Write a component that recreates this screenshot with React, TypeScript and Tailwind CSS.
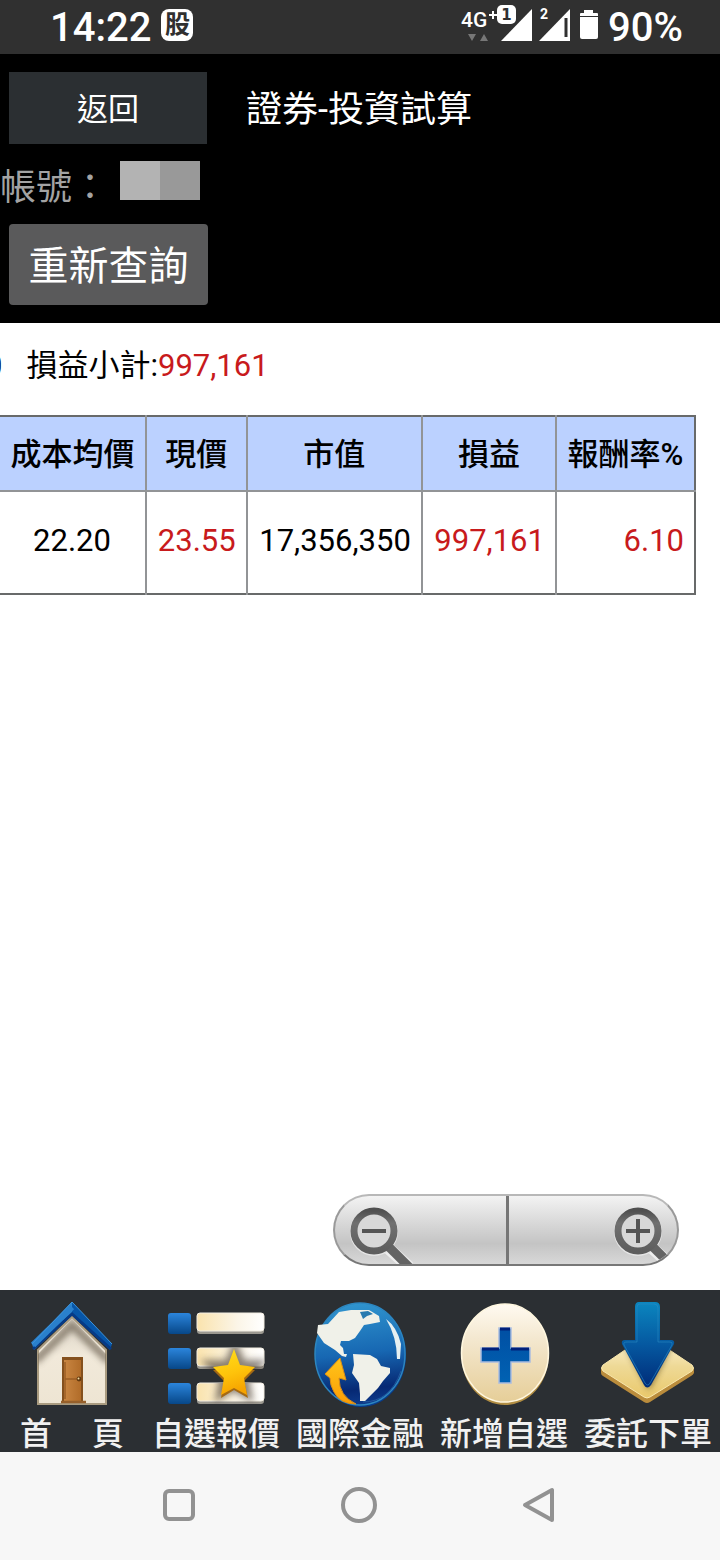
import type { ReactNode } from "react";

function StatusBar() {
  return (
    <header className="flex h-[54px] items-center justify-between bg-[#303030] pl-[50px] pr-[37px] text-white">
      <div className="flex items-center gap-[10px]">
        <span className="pt-0.5 text-[40px] leading-[52px] font-medium">14:22</span>
        <span className="mb-1 flex size-8 items-center justify-center rounded-lg bg-white text-[25px] leading-8 font-bold text-[#303030]">
          股
        </span>
      </div>
      <div className="flex items-center">
        <svg width="140" height="54" viewBox="0 0 140 54" aria-hidden="true">
          <text x="0" y="27" fontSize="21" fontWeight="500" fill="#fff">4G</text>
          <path d="M28 15h8M32 11v8" stroke="#fff" strokeWidth="2" />
          <path d="M7 34h8l-4 7z M19 41h8l-4-7z" fill="#777" />
          <path d="M71 9v32H40z" fill="#fff" />
          <rect x="36" y="5" width="19" height="19" rx="5" fill="#fff" />
          <text x="45.5" y="20" fontSize="15" fontWeight="700" textAnchor="middle" fill="#303030" fontFamily="DejaVu Sans">1</text>
          <text x="79" y="19" fontSize="14" fontWeight="700" fill="#fff">2</text>
          <path d="M109 9v32H78z" fill="#fff" />
          <path d="M105 18v19" stroke="#303030" strokeWidth="3" />
          <path d="M123 10h9v3h4q1 0 1 1v2h-18v-2q0-1 1-1h3z" fill="#fff" />
          <path d="M119 17h18v20q0 2-2 2h-14q-2 0-2-2z" fill="#fff" />
        </svg>
        <span className="ml-[7px] pt-0.5 text-[40px] leading-[52px] font-medium">90%</span>
      </div>
    </header>
  );
}

function AccountHeader() {
  return (
    <section className="bg-black px-[9px] pt-[18px] pb-[18px]">
      <div className="flex items-center gap-[39px]">
        <button className="h-[72px] w-[198px] bg-[#2b2f32] pt-1 text-[31px] text-white">返回</button>
        <h1 className="pt-1 text-[36px] leading-[68px] text-white">證券-投資試算</h1>
      </div>
      <div className="-ml-[9px] flex h-20 items-center gap-3">
        <span className="pt-2 text-[36px] leading-[72px] text-[#a3a3a3]">帳號：</span>
        <span className="mb-2 flex h-[39px] w-20">
          <span className="flex-1 bg-[#b3b3b3]" />
          <span className="flex-1 bg-[#999999]" />
        </span>
      </div>
      <button className="h-[81px] w-[199px] rounded-[4px] bg-[#5a5a5b] pt-1 text-[40px] text-white">重新查詢</button>
    </section>
  );
}

const columns = [
  { title: "成本均價", value: "22.20", col: "w-[21%]", cell: "pr-[34px]" },
  { title: "現價", value: "23.55", col: "w-[14.5%]", cell: "pr-[10px] text-[#c81a1c]" },
  { title: "市值", value: "17,356,350", col: "w-[25.2%]", cell: "pr-[10px]" },
  { title: "損益", value: "997,161", col: "w-[19.3%]", cell: "pr-[10px] text-[#c81a1c]" },
  { title: "報酬率%", value: "6.10", col: "w-[20%]", cell: "pr-[10px] text-[#c81a1c]" },
];

function Holdings() {
  return (
    <div className="overflow-hidden pr-6">
      <p className="-ml-[15px] flex h-[92px] items-center gap-6 pb-1.5 text-[31px] text-black">
        <span>0</span>
        <span>
          損益小計:<span className="text-[#c81a1c]">997,161</span>
        </span>
      </p>
      <table className="w-full table-fixed border-collapse border-y-2 border-r-2 border-[#686a6a] text-black">
        <colgroup>
          {columns.map((c) => (
            <col key={c.title} className={c.col} />
          ))}
        </colgroup>
        <thead>
          <tr className="h-[75px] bg-[#bbd1ff]">
            {columns.map((c) => (
              <th key={c.title} className="border-r-2 border-b-2 border-[#929496] p-0 pt-1 text-[31px] font-medium whitespace-nowrap last:border-r-[#686a6a]">
                {c.title}
              </th>
            ))}
          </tr>
        </thead>
        <tbody>
          <tr className="h-[103px]">
            {columns.map((c) => (
              <td key={c.title} className={"border-r-2 border-[#929496] pb-0.5 text-right text-[31px] last:border-r-[#686a6a] " + c.cell}>
                {c.value}
              </td>
            ))}
          </tr>
        </tbody>
      </table>
    </div>
  );
}

function Lens({ plus }: { plus?: boolean }) {
  return (
    <svg width="64" height="58" viewBox="0 0 64 58" aria-hidden="true">
      <defs>
        <linearGradient id={plus ? "ringIn" : "ringOut"} x1="0" y1="0" x2="0" y2="1">
          <stop offset="0" stopColor="#505050" />
          <stop offset="0.3" stopColor="#707070" />
          <stop offset="1" stopColor="#5e5e5e" />
        </linearGradient>
      </defs>
      <path d="M38 41l22 20" stroke="#eee" strokeWidth="12" />
      <circle cx="25" cy="26" r="20" fill="none" stroke="#e4e4e4" strokeWidth="8" />
      <path d="M38 39l22 22" stroke="#646464" strokeWidth="9" />
      <circle cx="25" cy="25" r="20" fill="#d8d8d8" stroke={plus ? "url(#ringIn)" : "url(#ringOut)"} strokeWidth="7" />
      <path d={plus ? "M13 25h24M25 13v24" : "M13 25h24"} stroke="#555" strokeWidth="4" />
    </svg>
  );
}

function ZoomControls() {
  return (
    <div className="mr-[41px] mb-6 grid h-[72px] w-[346px] grid-cols-2 self-end overflow-hidden rounded-full border-2 border-t-[#b8b8b8] border-r-[#999] border-b-[#777] border-l-[#999] bg-linear-to-b from-[#f3f3f3] via-[#c4c4c4] via-70% to-[#d8d8d8]">
      <button aria-label="縮小" className="flex items-end pl-[14px]">
        <Lens />
      </button>
      <button aria-label="放大" className="flex items-end justify-end border-l-3 border-[#767676]">
        <Lens plus />
      </button>
    </div>
  );
}

function HouseIcon() {
  return (
    <svg width="100" height="110" viewBox="1 0 100 110" aria-hidden="true">
      <defs>
        <linearGradient id="wall" x1="0" y1="0" x2="0" y2="1">
          <stop offset="0" stopColor="#d9d2c5" />
          <stop offset="0.45" stopColor="#f1e9da" />
          <stop offset="1" stopColor="#eee5d3" />
        </linearGradient>
        <linearGradient id="roofLeft" x1="0" y1="0" x2="0" y2="1">
          <stop offset="0" stopColor="#2b87cf" />
          <stop offset="1" stopColor="#2279cb" />
        </linearGradient>
        <linearGradient id="door" x1="0" y1="0" x2="1" y2="0">
          <stop offset="0" stopColor="#c98642" />
          <stop offset="1" stopColor="#b16c29" />
        </linearGradient>
        <filter id="eave" x="-20%" y="-20%" width="140%" height="140%">
          <feGaussianBlur stdDeviation="3" />
        </filter>
        <clipPath id="wallShape">
          <path d="M17 54L51 19l34 35v50H17z" />
        </clipPath>
      </defs>
      <path d="M17 50L51 17l34 33v54H17z" fill="url(#wall)" stroke="#a99b80" strokeWidth="2" />
      <path d="M14 61L51 25l37 36" fill="none" stroke="#6f6554" strokeWidth="8" opacity="0.75" filter="url(#eave)" clipPath="url(#wallShape)" />
      <path d="M51 2L11 44l2 6L51 15z" fill="url(#roofLeft)" />
      <path d="M51 2l40 42-2 6L51 15z" fill="#0756a8" />
      <path d="M12 49L51 14l39 35" fill="none" stroke="#063a86" strokeWidth="3" />
      <path d="M12 45L51 7" fill="none" stroke="#2a80cc" strokeWidth="6" />
      <path d="M11 44L51 2l40 42" fill="none" stroke="#3c93dc" strokeWidth="1" />
      <rect x="41" y="57" width="21" height="45" fill="#84501d" />
      <rect x="43" y="60" width="17" height="41" fill="url(#door)" />
      <path d="M44 79h15M44 62v37" stroke="#9a5d24" strokeWidth="1.5" />
      <path d="M40 102h25" stroke="#96602b" strokeWidth="2.5" />
      <circle cx="58" cy="79" r="2.4" fill="#62390f" />
      <circle cx="57.5" cy="78.5" r="1" fill="#f3dba0" />
    </svg>
  );
}

function WatchlistIcon() {
  return (
    <svg width="100" height="110" viewBox="0 0 100 110" aria-hidden="true">
      <defs>
        <linearGradient id="blueTile" x1="0" y1="0" x2="0" y2="1">
          <stop offset="0" stopColor="#2b85dc" />
          <stop offset="1" stopColor="#074788" />
        </linearGradient>
        <linearGradient id="creamBar" x1="0" y1="0" x2="1" y2="0">
          <stop offset="0" stopColor="#fae3ad" />
          <stop offset="0.6" stopColor="#fbf5e7" />
          <stop offset="1" stopColor="#fff" />
        </linearGradient>
        <linearGradient id="gold" x1="0" y1="0" x2="0.3" y2="1">
          <stop offset="0" stopColor="#ffe01c" />
          <stop offset="0.6" stopColor="#fec30b" />
          <stop offset="1" stopColor="#f6a400" />
        </linearGradient>
        <filter id="starShade" x="-40%" y="-40%" width="180%" height="180%">
          <feGaussianBlur stdDeviation="3.5" />
        </filter>
        <clipPath id="bars">
          <path d="M31 13h67v22H31z M31 48h67v22H31z M31 83h67v22H31z" />
        </clipPath>
      </defs>
      {[13, 48, 83].map((y) => (
        <g key={y}>
          <rect x="2" y={y} width="23" height="21" rx="3" fill="url(#blueTile)" />
          <rect x="31" y={y} width="67" height="21" rx="3" fill="#9b9890" />
          <rect x="31" y={y} width="67" height="18" rx="3" fill="url(#creamBar)" stroke="#f3eee3" strokeWidth="1" />
        </g>
      ))}
      <path d="M69 48l7 16h16L79 77l3 18-14-8-14 8 3-18-13-13h18z" fill="#40362a" stroke="#40362a" strokeWidth="8" opacity="0.6" filter="url(#starShade)" clipPath="url(#bars)" />
      <path d="M68 53l7 15 14 2-11 11 4 17-14-8-13 8 3-17-11-11 15-2z" fill="#a66a12" />
      <path d="M68 49l6 16 15 2-11 11 3 17-13-7-13 7 3-17-11-11 15-2z" fill="url(#gold)" />
    </svg>
  );
}

function GlobeIcon() {
  return (
    <svg width="100" height="110" viewBox="0 -1 100 110" aria-hidden="true">
      <defs>
        <linearGradient id="ocean" x1="0.4" y1="0" x2="0.5" y2="1">
          <stop offset="0" stopColor="#3095cf" />
          <stop offset="0.5" stopColor="#1767b2" />
          <stop offset="0.85" stopColor="#062974" />
          <stop offset="1" stopColor="#0e3b8b" />
        </linearGradient>
        <linearGradient id="arrowGold" x1="0" y1="0" x2="0" y2="1">
          <stop offset="0" stopColor="#ffc51b" />
          <stop offset="1" stopColor="#fb9d04" />
        </linearGradient>
      </defs>
      <ellipse cx="51" cy="54" rx="45" ry="52" fill="#073c8d" />
      <ellipse cx="50" cy="53" rx="45" ry="51" fill="url(#ocean)" stroke="#2d86bf" strokeWidth="1.5" />
      <path d="M18 23l11-12 12-2 18 0 10 6 1 6-10 2-6 1-4 6-5 7-6 3-8 0-1 4 3 3 1 6 3 0-1 3-4-1-7-6-11-7-7-10 1-8z" fill="#f0f1e9" />
      <path d="M50 11l8-1 5 3-6 2-4 3z" fill="#287bb0" />
      <path d="M76 18q11 8 15 25l-1 15h-3q0-22-11-40z" fill="#e7f0f1" />
      <path d="M43 53l17 1 7 4 4 7 9 2 0 5-7 8-5 7-13 13-5 0 0-7-1-11-7-10 2-8z" fill="#f0f1e9" />
      <path d="M30 57l6 22-7-2q0 18 17 26-16 0-22-12-4-7-4-14l-5-4z" fill="url(#arrowGold)" stroke="#d88d19" strokeWidth="1" />
      <path d="M91 70q-11 31-38 31" fill="none" stroke="#2762a5" strokeWidth="1" opacity="0.8" />
    </svg>
  );
}

function AddIcon() {
  return (
    <svg width="100" height="110" viewBox="0 0 100 110" aria-hidden="true">
      <defs>
        <linearGradient id="coin" x1="0" y1="0" x2="0" y2="1">
          <stop offset="0" stopColor="#fffaf1" />
          <stop offset="0.35" stopColor="#f4e8d0" />
          <stop offset="1" stopColor="#e6ce98" />
        </linearGradient>
        <linearGradient id="plusFill" x1="0" y1="0" x2="0" y2="1">
          <stop offset="0" stopColor="#004fa3" />
          <stop offset="1" stopColor="#0162b3" />
        </linearGradient>
      </defs>
      <ellipse cx="51" cy="56" rx="43.5" ry="49" fill="#b18d43" />
      <ellipse cx="51" cy="53" rx="43.5" ry="49" fill="url(#coin)" stroke="#fff7df" strokeWidth="1.5" />
      <path d="M45 28h12v20h19v14H57v21H45V62H27V48h18z" fill="url(#plusFill)" stroke="#a9bce0" strokeWidth="1.5" />
      <path d="M46 29h10M28 49h17M57 49h18" stroke="#00207a" strokeWidth="3" />
    </svg>
  );
}

function OrderIcon() {
  return (
    <svg width="100" height="110" viewBox="1 1 100 110" aria-hidden="true">
      <defs>
        <linearGradient id="plate" x1="0" y1="0" x2="0" y2="1">
          <stop offset="0" stopColor="#fff7dd" />
          <stop offset="0.5" stopColor="#eed996" />
          <stop offset="1" stopColor="#eac96b" />
        </linearGradient>
        <linearGradient id="arrowBlue" x1="0" y1="0" x2="0" y2="1">
          <stop offset="0" stopColor="#0b86bf" />
          <stop offset="0.5" stopColor="#0558a0" />
          <stop offset="1" stopColor="#002b78" />
        </linearGradient>
        <filter id="plateShade" x="-20%" y="-20%" width="140%" height="140%">
          <feGaussianBlur stdDeviation="3" />
        </filter>
        <clipPath id="plateShape">
          <path d="M4 66L50 36l47 30v4L50 101 4 70z" />
        </clipPath>
      </defs>
      <path d="M4 69L50 39l47 30v5q-1 2-3 3L53 103q-3 2-6 0L6 77q-2-1-2-3z" fill="#ba8c3c" />
      <path d="M6 66L50 36l45 30q3 3 0 6L53 98q-3 2-6 0L6 72q-3-3 0-6z" fill="url(#plate)" stroke="#f9e8ae" strokeWidth="1" />
      <path d="M26 42h51L52 91z" fill="#4b3b15" opacity="0.7" filter="url(#plateShade)" clipPath="url(#plateShape)" />
      <path d="M42 3h16q5 0 5 5v33h11q4 0 3 4L54 86q-4 5-7 0L25 45q-1-4 3-4h10V8q0-5 4-5z" fill="url(#arrowBlue)" />
      <path d="M40 8q0-3 3-3h14q4 0 4 4v34h12q3 0 2 3L53 84q-2 4-5 0L27 46q-1-3 3-3h10z" fill="none" stroke="#298bc1" strokeWidth="1" opacity="0.6" />
    </svg>
  );
}

const tabs: { label: string; icon: ReactNode }[] = [
  { label: "首\u3000 頁", icon: <HouseIcon /> },
  { label: "自選報價", icon: <WatchlistIcon /> },
  { label: "國際金融", icon: <GlobeIcon /> },
  { label: "新增自選", icon: <AddIcon /> },
  { label: "委託下單", icon: <OrderIcon /> },
];

function TabBar() {
  return (
    <nav className="grid h-[162px] grid-cols-5 bg-[#2b2f33]">
      {tabs.map((t) => (
        <button key={t.label} className="flex flex-col items-center pt-[10px] text-[32px] leading-[48px] font-medium whitespace-pre text-[#f1f1f1]">
          {t.icon}
          <span>{t.label}</span>
        </button>
      ))}
    </nav>
  );
}

function SystemBar() {
  return (
    <footer className="flex h-[108px] items-center justify-center gap-[140px] bg-[#f7f7f7]">
      <button aria-label="最近使用">
        <svg width="40" height="40" viewBox="0 0 40 40" fill="none" stroke="#929292" strokeWidth="4">
          <rect x="5" y="5" width="28" height="28" rx="4" />
        </svg>
      </button>
      <button aria-label="主畫面">
        <svg width="40" height="40" viewBox="0 0 40 40" fill="none" stroke="#929292" strokeWidth="4">
          <circle cx="19" cy="19" r="16" />
        </svg>
      </button>
      <button aria-label="上一頁">
        <svg width="40" height="40" viewBox="0 0 40 40" fill="none" stroke="#929292" strokeWidth="4" strokeLinejoin="round">
          <path d="M32 4v30L5 19z" />
        </svg>
      </button>
    </footer>
  );
}

export default function App() {
  return (
    <div className="flex min-h-screen flex-col bg-white font-[Roboto,'Noto_Sans_CJK_TC',sans-serif]">
      <StatusBar />
      <AccountHeader />
      <main className="flex flex-1 flex-col justify-between">
        <Holdings />
        <ZoomControls />
      </main>
      <TabBar />
      <SystemBar />
    </div>
  );
}
